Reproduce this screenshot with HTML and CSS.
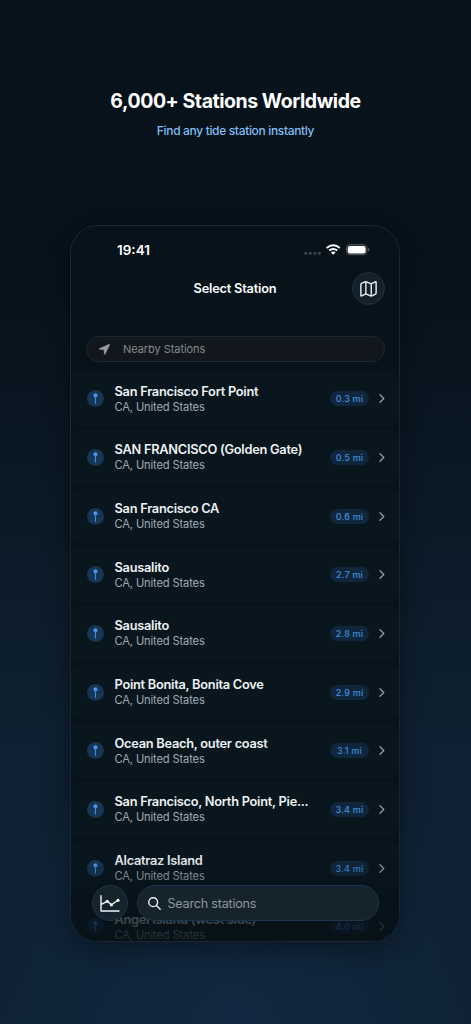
FILE: index.html
```html
<!DOCTYPE html>
<html lang="en">
<head>
<meta charset="utf-8">
<title>Select Station</title>
<link rel="stylesheet" href="styles.css">
</head>
<body>
<svg width="0" height="0" class="defs">
  <symbol id="pin" viewBox="0 0 17 17"><circle cx="8.5" cy="5.4" r="2.1" fill="#3f8fe8"/><circle cx="7.9" cy="4.8" r=".6" fill="#9cccff"/><path d="M8.5 7v6.2" stroke="#3f8fe8" stroke-width="1.1" stroke-linecap="round"/></symbol>
  <symbol id="chevron" viewBox="0 0 6 9"><path d="M1 .8 4.8 4.5 1 8.2" fill="none" stroke="#929ba5" stroke-width="1.3" stroke-linecap="round" stroke-linejoin="round"/></symbol>
</svg>
<header class="hero">
  <h1 class="headline">6,000+ Stations Worldwide</h1>
  <p class="tagline">Find any tide station instantly</p>
</header>
<main class="phone">
  <div class="status">
    <span class="time">19:41</span>
    <svg class="signal" width="66" height="12" viewBox="0 0 66 12">
      <g fill="#3f474f"><circle cx="1.8" cy="9.3" r="1.5"/><circle cx="6.3" cy="9.3" r="1.5"/><circle cx="10.8" cy="9.3" r="1.5"/><circle cx="15.3" cy="9.3" r="1.5"/></g>
      <g fill="none" stroke="#fff" stroke-width="1.9"><path d="M22.6 4q6.6-5.4 13.2 0"/><path d="M25.2 6.6q4-3.3 8 0"/></g>
      <path d="M26.8 8.3q2.4-1.8 4.8 0l-2.4 2.5z" fill="#fff"/>
      <rect x="42.5" y=".7" width="20.4" height="10" rx="3.3" fill="#14202a" stroke="#515a62"/>
      <rect x="43.8" y="2" width="17.8" height="7.4" rx="2.2" fill="#fff"/>
      <path d="M64 4v3.6q1.5-.5 1.5-1.8T64 4z" fill="#515a62"/>
    </svg>
  </div>
  <div class="navbar">
    <h2 class="screen-title">Select Station</h2>
    <div class="map-button"><svg width="17" height="16" viewBox="0 0 18 17" fill="none" stroke="#e9edf0" stroke-width="1.5" stroke-linejoin="round"><path d="M.9 3.5Q.9 2.8 1.5 2.5L5.3.9Q6 .6 6.7.9l4.6 1.9q.5.2 1 0L16.2 1q.9-.4.9.5v11.6q0 .6-.6.9l-4 1.9q-.6.3-1.2 0L6.7 14q-.5-.2-1 0L1.8 15.8q-.9.4-.9-.5zM6.2.9v13M11.9 3v13"/></svg></div>
  </div>
  <div class="nearby">
    <svg width="11" height="11" viewBox="0 0 11 11"><path d="M10.2.3.6 4.6q-.7.6.1.8l4.4.2.2 4.5q.3.8.8 0L10.7.8q.1-.6-.5-.5z" fill="#9b9ea1" stroke="#9b9ea1" stroke-width=".5"/></svg>
    <span>Nearby Stations</span>
  </div>
  <div class="stations">
    <div class="row"><svg class="pin"><use href="#pin"/></svg><div class="info"><div class="name">San Francisco Fort Point</div><div class="place">CA, United States</div></div><span class="distance">0.3 mi</span><svg class="chevron"><use href="#chevron"/></svg></div>
    <div class="row"><svg class="pin"><use href="#pin"/></svg><div class="info"><div class="name">SAN FRANCISCO (Golden Gate)</div><div class="place">CA, United States</div></div><span class="distance">0.5 mi</span><svg class="chevron"><use href="#chevron"/></svg></div>
    <div class="row"><svg class="pin"><use href="#pin"/></svg><div class="info"><div class="name">San Francisco CA</div><div class="place">CA, United States</div></div><span class="distance">0.6 mi</span><svg class="chevron"><use href="#chevron"/></svg></div>
    <div class="row"><svg class="pin"><use href="#pin"/></svg><div class="info"><div class="name">Sausalito</div><div class="place">CA, United States</div></div><span class="distance">2.7 mi</span><svg class="chevron"><use href="#chevron"/></svg></div>
    <div class="row"><svg class="pin"><use href="#pin"/></svg><div class="info"><div class="name">Sausalito</div><div class="place">CA, United States</div></div><span class="distance">2.8 mi</span><svg class="chevron"><use href="#chevron"/></svg></div>
    <div class="row"><svg class="pin"><use href="#pin"/></svg><div class="info"><div class="name">Point Bonita, Bonita Cove</div><div class="place">CA, United States</div></div><span class="distance">2.9 mi</span><svg class="chevron"><use href="#chevron"/></svg></div>
    <div class="row"><svg class="pin"><use href="#pin"/></svg><div class="info"><div class="name">Ocean Beach, outer coast</div><div class="place">CA, United States</div></div><span class="distance">3.1 mi</span><svg class="chevron"><use href="#chevron"/></svg></div>
    <div class="row"><svg class="pin"><use href="#pin"/></svg><div class="info"><div class="name">San Francisco, North Point, Pie...</div><div class="place">CA, United States</div></div><span class="distance">3.4 mi</span><svg class="chevron"><use href="#chevron"/></svg></div>
    <div class="row"><svg class="pin"><use href="#pin"/></svg><div class="info"><div class="name">Alcatraz Island</div><div class="place">CA, United States</div></div><span class="distance">3.4 mi</span><svg class="chevron"><use href="#chevron"/></svg></div>
    <div class="row"><svg class="pin"><use href="#pin"/></svg><div class="info"><div class="name">Angel Island (west side)</div><div class="place">CA, United States</div></div><span class="distance">4.0 mi</span><svg class="chevron"><use href="#chevron"/></svg></div>
  </div>
  <div class="fade"></div>
  <div class="toolbar">
    <div class="chart-button"><svg width="20" height="17" viewBox="0 0 20 17" fill="none" stroke="#eef3f6" stroke-width="1.4" stroke-linecap="round" stroke-linejoin="round"><path d="M1 .8V16h18M1.4 9.4 7.2 6.3l4.2 3.5L18 5.2"/><g fill="#eef3f6" stroke="none"><circle cx="7.2" cy="6.3" r="1.6"/><circle cx="11.4" cy="9.8" r="1.6"/><circle cx="18" cy="5.3" r="1.6"/></g></svg></div>
    <div class="search">
      <svg width="13" height="13" viewBox="0 0 13 13" fill="none" stroke="#eef3f6" stroke-width="1.4" stroke-linecap="round"><circle cx="5.2" cy="5.2" r="4.4"/><path d="m8.4 8.4 3.8 3.8"/></svg>
      <span>Search stations</span>
    </div>
  </div>
</main>
</body>
</html>
```
FILE: styles.css
```css
* { box-sizing: border-box; }
body {
  margin: 0;
  width: 471px;
  height: 1024px;
  overflow: hidden;
  display: flex;
  flex-direction: column;
  align-items: center;
  font-family: Inter, "Liberation Sans", sans-serif;
  background:
    radial-gradient(ellipse 280px 300px at 50% 100%, rgba(20, 46, 78, .5), transparent),
    linear-gradient(180deg, #07121a 0, #07121a 25%, #0e2031 72%, #0f2233 100%);
}
.defs { position: absolute; }
.hero { height: 225px; padding-top: 88px; text-align: center; flex: none; }
.headline { margin: 0; font-size: 19.5px; line-height: 26px; font-weight: 700; letter-spacing: -.45px; color: #fff; white-space: nowrap; }
.tagline { margin: 9px 0 0; font-size: 12px; line-height: 16px; font-weight: 500; letter-spacing: -.34px; color: #80bdf4; white-space: nowrap; }
.phone {
  position: relative;
  flex: none;
  width: 330px;
  height: 717px;
  margin-right: 1px;
  border: 1px solid #1b262e;
  border-radius: 28px;
  background: #07121a;
  overflow: hidden;
  box-shadow: 0 8px 24px rgba(0, 5, 10, .4);
}
.status { height: 46px; display: flex; justify-content: space-between; align-items: center; padding: 1px 29px 0 46px; }
.time { font-size: 13.5px; font-weight: 600; color: #fff; }
.navbar { height: 33px; display: grid; grid-template-columns: 33px 1fr 33px; align-items: center; margin: 0 14px; }
.screen-title { grid-column: 2; margin: 0; text-align: center; font-size: 12.8px; line-height: 18px; font-weight: 600; letter-spacing: -.2px; color: #f8fafb; }
.map-button { width: 33px; height: 33px; border-radius: 50%; border: 1px solid #1b3447; background: #15202b; display: flex; align-items: center; justify-content: center; }
.nearby { height: 26px; margin: 31px 14px 0 15px; padding: 0 12px; display: flex; align-items: center; gap: 13px; border: 1px solid #1b2930; border-radius: 13px; background: #11171c; color: #85898c; font-size: 11px; letter-spacing: -.06px; }
.stations { padding-top: 9px; display: flex; flex-direction: column; gap: 3.2px; }
.row { flex: none; height: 55.5px; padding: 0 14px 0 16px; display: flex; align-items: center; border-radius: 9px; background: #09161e; }
.pin { width: 17px; height: 17px; border-radius: 50%; background: #173653; flex: none; }
.info { flex: 1; margin-left: 10.5px; padding-top: 1.4px; white-space: nowrap; }
.name { font-size: 12.8px; line-height: 16px; font-weight: 600; letter-spacing: -.26px; color: #edf1f3; }
.place { font-size: 11.2px; line-height: 15.6px; letter-spacing: -.16px; color: #a0a9b1; }
.distance { width: 39px; height: 15px; border-radius: 8px; background: #10263c; color: #458fdd; font-size: 9px; line-height: 15px; font-weight: 500; letter-spacing: .2px; text-align: center; }
.chevron { width: 6px; height: 9px; margin-left: 10px; flex: none; }
.fade { position: absolute; left: 0; right: 0; bottom: 0; height: 85px; background: linear-gradient(180deg, rgba(6, 16, 23, 0), rgba(6, 16, 23, .25) 25%, rgba(6, 16, 23, .72) 65%, rgba(6, 16, 23, .82)); }
.toolbar { position: absolute; left: 21px; right: 20px; bottom: 20px; height: 36px; display: flex; gap: 8.5px; }
.chart-button, .search { background: #15232d; border: 1px solid #1b364c; display: flex; align-items: center; }
.chart-button { width: 36px; border-radius: 50%; justify-content: center; flex: none; }
.search { flex: 1; border-radius: 18px; padding: 0 10px; gap: 7px; color: #8f969c; font-size: 12.6px; letter-spacing: -.22px; }
```
